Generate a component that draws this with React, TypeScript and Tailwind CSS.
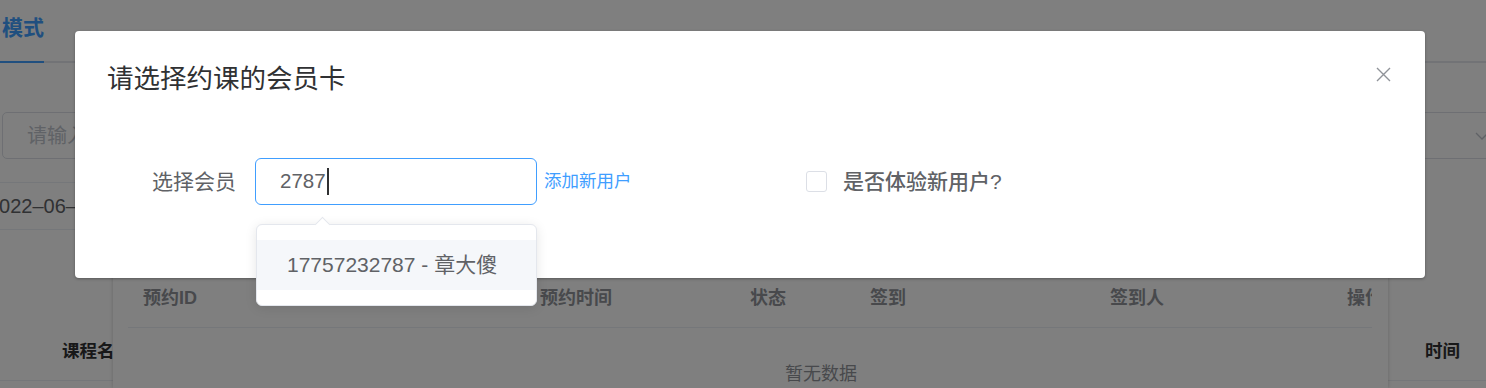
import React from "react";

const font = "font-['Liberation_Sans','Noto_Sans_CJK_SC',sans-serif]";

function BackPage() {
  return (
    <div className="flex flex-col">
      <div className="flex h-[63px] border-b-2 border-[#e4e7ed]">
        <div className="-mb-[2px] flex h-[63px] w-[44px] items-center border-b-2 border-[#409eff] pb-[6px] pl-[2px] text-[21px] font-bold text-[#409eff]">
          模式
        </div>
      </div>

      <div className="mt-[49px] flex h-[47px] items-stretch">
        <div className="ml-[2px] flex w-[320px] items-center rounded-[5px] border border-[#dcdfe6] pl-[24px] text-[20px] text-[#c0c4cc]">
          请输入关键字
        </div>
        <div className="-mr-[20px] ml-auto flex w-[360px] items-center justify-end rounded-[5px] border border-[#dcdfe6] pr-[16px]">
          <svg width="14" height="8" viewBox="0 0 14 8" fill="none">
            <path d="M1 1l6 6 6-6" stroke="#c0c4cc" strokeWidth="1.3" />
          </svg>
        </div>
      </div>

      <div className="mt-[23px] flex h-[48px] w-[700px] items-center overflow-hidden border-y border-[#ebeef5] text-[20px] text-[#606266]">
        <span className="-ml-[12px] shrink-0">2022–06–08 10:00</span>
      </div>

      <div className="mt-[92px] flex h-[59px] items-center justify-between border-b border-[#ebeef5] pl-[62px] pr-[26px] text-[17.5px] font-bold text-[#303133]">
        <span>课程名称</span>
        <span>时间</span>
      </div>
    </div>
  );
}

const cols = [
  { w: "w-[397px]", label: "预约ID" },
  { w: "w-[210px]", label: "预约时间" },
  { w: "w-[120px]", label: "状态" },
  { w: "w-[240px]", label: "签到" },
  { w: "w-[237px]", label: "签到人" },
  { w: "w-[182px]", label: "操作" },
];

function RecordLayer() {
  return (
    <div className="absolute bottom-0 left-[113px] right-[98px] top-[230px] bg-white pl-[15px] pr-[16px] pt-[40px] shadow-[0_0_4px_rgba(0,0,0,0.2)]">
      <div className="overflow-hidden">
        <div className="w-[1386px]">
          <div className="flex h-[58px] items-center border-b border-[#ebeef5] text-[18px] font-bold text-[#909399]">
            {cols.map((c) => (
              <div key={c.label} className={`${c.w} shrink-0 pl-[15px]`}>
                {c.label}
              </div>
            ))}
          </div>
          <div className="flex h-[92px] items-center justify-center text-[18px] text-[#909399]">
            暂无数据
          </div>
        </div>
      </div>
    </div>
  );
}

function MemberDialog() {
  return (
    <div className="absolute left-[75px] top-[31px] h-[247px] w-[1350px] rounded-[4px] bg-white shadow-[0_1px_3px_rgba(0,0,0,0.3)]">
      <div className="flex items-start justify-between pl-[32px] pr-[34px] pt-[30px]">
        <div className="text-[26.5px] leading-[36px] text-[#303133]">请选择约课的会员卡</div>
        <svg className="mt-[6px]" width="15" height="15" viewBox="0 0 15 15" fill="none">
          <path d="M1 1l13 13M14 1L1 14" stroke="#909399" strokeWidth="1.4" />
        </svg>
      </div>

      <div className="mt-[61px] flex items-center">
        <div className="flex w-[731px] items-center">
          <div className="w-[180px] pr-[19px] text-right text-[21px] text-[#606266]">选择会员</div>
          <div className="relative">
            <div className="flex h-[47px] w-[282px] items-center rounded-[6px] border border-[#409eff] pl-[24px] text-[20.5px] text-[#606266]">
              2787
              <span className="ml-[1px] inline-block h-[27px] w-[2px] bg-[#303133]" />
            </div>
            <div className="absolute left-[1px] top-[66px] w-[281px] rounded-[6px] border border-[#e4e7ed] bg-white py-[15px] shadow-[0_2px_12px_rgba(0,0,0,0.1)]">
              <div className="absolute -top-[6px] left-[60px] h-[11px] w-[11px] rotate-45 border-l border-t border-[#e4e7ed] bg-white" />
              <div className="flex h-[50px] items-center bg-[#f5f7fa] pl-[30px] text-[21px] text-[#606266]">
                17757232787 - 章大傻
              </div>
            </div>
          </div>
          <div className="ml-[7px] text-[17.5px] text-[#409eff]">添加新用户</div>
        </div>
        <div className="flex items-center">
          <div className="h-[21px] w-[21px] rounded-[3px] border border-[#dcdfe6] bg-white" />
          <div className="ml-[16px] text-[21px] font-medium text-[#606266]">是否体验新用户?</div>
        </div>
      </div>
    </div>
  );
}

export default function App() {
  return (
    <div className={`relative h-[388px] w-[1486px] overflow-hidden bg-white ${font}`}>
      <BackPage />
      <RecordLayer />
      <div className="absolute inset-0 bg-black/50" />
      <MemberDialog />
    </div>
  );
}
